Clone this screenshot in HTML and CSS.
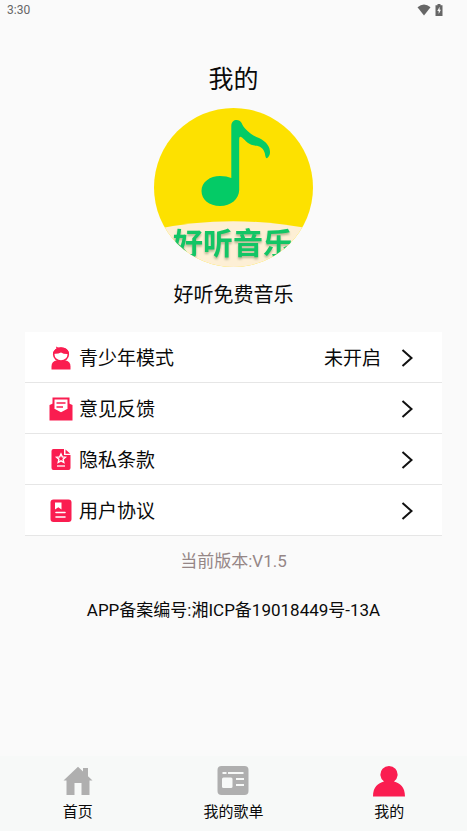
FILE: index.html
```html
<!DOCTYPE html>
<html lang="zh-CN">
<head>
<meta charset="utf-8">
<meta name="viewport" content="width=device-width, initial-scale=1">
<title>我的</title>
<link rel="stylesheet" href="styles.css">
</head>
<body>
<div class="status">
  <span>3:30</span>
  <span class="status-icons">
    <svg width="14" height="12" viewBox="0 0 14 12"><path d="M.5 3.200Q7-2 13.500 3.200L7 11.500Z" fill="#666"/></svg>
    <svg width="8" height="12" viewBox="0 0 8 12"><path d="M2.500 0h3v1.200H7.500V12H.5V1.200h2z" fill="#666"/><path d="M4.600 2.800 2.300 7h1.400v3L5.900 5.800H4.600z" fill="#fafafa"/></svg>
  </span>
</div>
<main class="page">
  <h1 class="title">我的</h1>
  <svg class="avatar" viewBox="0 0 159 159" role="img" aria-label="好听音乐">
    <defs>
      <clipPath id="round"><circle cx="79.500" cy="79.500" r="79.500"/></clipPath>
    </defs>
    <g clip-path="url(#round)">
      <rect width="159" height="159" fill="#fde100"/>
      <path d="M0 121.500Q79 105 159 121.500V159H0Z" fill="#fdefd5"/>
      <path d="M77.300 70V18C77.300 10.500 85.500 10.500 87.600 15C90 21 97 27 105 30C113 34 116 39 116 44Q116 48 113 50.200Q112 50.500 111.300 48C111 42 107 38.500 103 37.800C95 37.500 92 33 88 29.500Q85.200 27.500 85.200 31V82C85 91 77 98 66 98C55 98 47.500 91.500 47.500 83C47.500 74 56 68 66 68Q73 68 77.300 70Z" fill="#04cb66"/>
      <text class="logo-text" x="79" y="146" text-anchor="middle">好听音乐</text>
    </g>
  </svg>
  <p class="name">好听免费音乐</p>
  <nav class="menu" aria-label="设置">
    <a class="row" href="#teen">
      <svg class="row-icon" viewBox="0 0 24 24"><path d="M2.500 23.500v-3Q2.500 15 8 14.300H16Q21.500 15 21.500 20.500V23.500Z" fill="#fa1d50"/><ellipse cx="12" cy="8.500" rx="7.300" ry="6.500" fill="#fff" stroke="#fa1d50" stroke-width="1.600"/><path d="M4 7.500C4.500 5 6 3.500 7.500 3L7 .5Q9 2 11 1.500C17 1 20 4 20 8Q15 8.500 12 6.500Q8 8.500 4 7.500Z" fill="#fa1d50"/></svg>
      <span class="label">青少年模式</span><span class="value">未开启</span>
      <svg class="chevron" viewBox="0 0 12 18"><path d="M1.500 1 10.500 9 1.500 17"/></svg>
    </a>
    <a class="row" href="#feedback">
      <svg class="row-icon" viewBox="0 0 24 24"><path d="M.5 8 4 6.500V11h16V6.500L23.500 8v15.500H.5Z" fill="#fa1d50"/><path d="M4.500 1.500h15V12.500L12 16.500 4.500 12.500Z" fill="#fff" stroke="#fa1d50" stroke-width="2"/><path d="M7.500 6h9M7.500 10h6.500" stroke="#fa1d50" stroke-width="1.700"/></svg>
      <span class="label">意见反馈</span>
      <svg class="chevron" viewBox="0 0 12 18"><path d="M1.500 1 10.500 9 1.500 17"/></svg>
    </a>
    <a class="row" href="#privacy">
      <svg class="row-icon" viewBox="0 0 24 24"><path d="M4.500 1H15v6h6.500v13q0 2-2 2h-15q-2 0-2-2V3q0-2 2-2Z" fill="#fa1d50"/><path d="M16.500 1.500 21.300 5.800H16.500Z" fill="#fa1d50"/><path d="m12 6 1.300 2.900 3.100.3-2.300 2.100.7 3.100-2.800-1.600-2.800 1.600.7-3.100-2.300-2.100 3.100-.3Z" fill="none" stroke="#fff" stroke-width="1.400"/><path d="M8 18h8" stroke="#fff" stroke-width="1.300"/></svg>
      <span class="label">隐私条款</span>
      <svg class="chevron" viewBox="0 0 12 18"><path d="M1.500 1 10.500 9 1.500 17"/></svg>
    </a>
    <a class="row" href="#terms">
      <svg class="row-icon" viewBox="0 0 24 24"><rect x="1.500" y=".5" width="21" height="22.500" rx="3" fill="#fa1d50"/><path d="M6 3.500h6.500v7L9.300 8.200 6 10.500Z" fill="#fff"/><path d="M7 13.500h9M7 18h9" stroke="#fff" stroke-width="1.600" stroke-linecap="round"/></svg>
      <span class="label">用户协议</span>
      <svg class="chevron" viewBox="0 0 12 18"><path d="M1.500 1 10.500 9 1.500 17"/></svg>
    </a>
  </nav>
  <p class="version">当前版本:V1.5</p>
  <p class="record">APP备案编号:湘ICP备19018449号-13A</p>
</main>
<nav class="tabs" aria-label="主导航">
  <a class="tab" href="#home">
    <svg class="tab-icon" viewBox="0 0 32 32"><path d="M16 1.800 21 6.500V3h5v8.300L30.500 15.500H27.500V30H19.500V18H12.500V30H4.500V15.500H1.500Z" fill="#afafaf"/></svg>
    <span>首页</span>
  </a>
  <a class="tab" href="#playlists">
    <svg class="tab-icon" viewBox="0 0 32 32"><rect x=".5" y="1" width="31" height="29" rx="4" fill="#afafaf"/><path d="M5.500 8h4M11 8h15.500M19 14h8M19 20h8" stroke="#f7f9f8" stroke-width="2"/><rect x="5" y="12.500" width="10.500" height="10.500" rx="1.500" fill="#f7f9f8"/></svg>
    <span>我的歌单</span>
  </a>
  <a class="tab" href="#me" aria-current="page">
    <svg class="tab-icon" viewBox="0 0 32 32"><path d="M0 31.500C0 22 5 18 11 16.500A8.600 8.600 0 1 1 21 16.500C27 18 32 22 32 31.500Z" fill="#fa1d50"/></svg>
    <span>我的</span>
  </a>
</nav>
</body>
</html>
```
FILE: styles.css
```css
* {
  box-sizing: border-box;
}

body {
  margin: 0;
  min-height: 100vh;
  display: flex;
  flex-direction: column;
  background: #fafafa;
  color: #0a0a0a;
  font-family: Roboto, "Noto Sans CJK SC", sans-serif;
}

h1,
p {
  margin: 0;
  font-weight: 400;
}

a {
  color: inherit;
  text-decoration: none;
}

svg {
  display: block;
  flex: none;
}

.status {
  height: 20px;
  padding: 0 24px 0 7px;
  display: flex;
  align-items: center;
  justify-content: space-between;
  font-size: 12px;
  line-height: 20px;
  color: #666;
}

.status-icons {
  display: flex;
  gap: 4px;
}

.page {
  flex: 1;
  padding: 40px 25px 0;
  display: flex;
  flex-direction: column;
  align-items: center;
}

.title {
  font-size: 25px;
  line-height: 40px;
}

.avatar {
  width: 159px;
  height: 159px;
  margin-top: 8px;
}

.logo-text {
  font-size: 30px;
  font-weight: 700;
  fill: #12c565;
  filter: drop-shadow(0 2px 1px rgba(90, 110, 60, 0.45));
}

.name {
  margin-top: 13px;
  font-size: 20px;
  line-height: 30px;
}

.menu {
  align-self: stretch;
  margin-top: 22px;
}

.row {
  height: 51px;
  padding: 2px 29px 0 24px;
  display: flex;
  align-items: center;
  background: #fff;
  border-bottom: 1px solid #e6e6e6;
  font-size: 19px;
  line-height: 30px;
}

.row-icon {
  width: 24px;
  height: 24px;
}

.label,
.value {
  padding-top: 2px;
}

.label {
  flex: 1;
  margin-left: 6px;
}

.value {
  margin-right: 20px;
}

.chevron {
  width: 12px;
  height: 18px;
  fill: none;
  stroke: #111;
  stroke-width: 2;
}

.version {
  margin-top: 12px;
  font-size: 17px;
  line-height: 26px;
  color: #958686;
}

.record {
  margin-top: 23px;
  font-size: 17px;
  line-height: 26px;
}

.tabs {
  height: 75px;
  padding-top: 9px;
  display: grid;
  grid-template-columns: repeat(3, 1fr);
  background: #f7f9f8;
}

.tab {
  display: flex;
  flex-direction: column;
  align-items: center;
  gap: 4px;
  font-size: 15px;
  line-height: 22px;
}

.tab-icon {
  width: 32px;
  height: 32px;
}
```
